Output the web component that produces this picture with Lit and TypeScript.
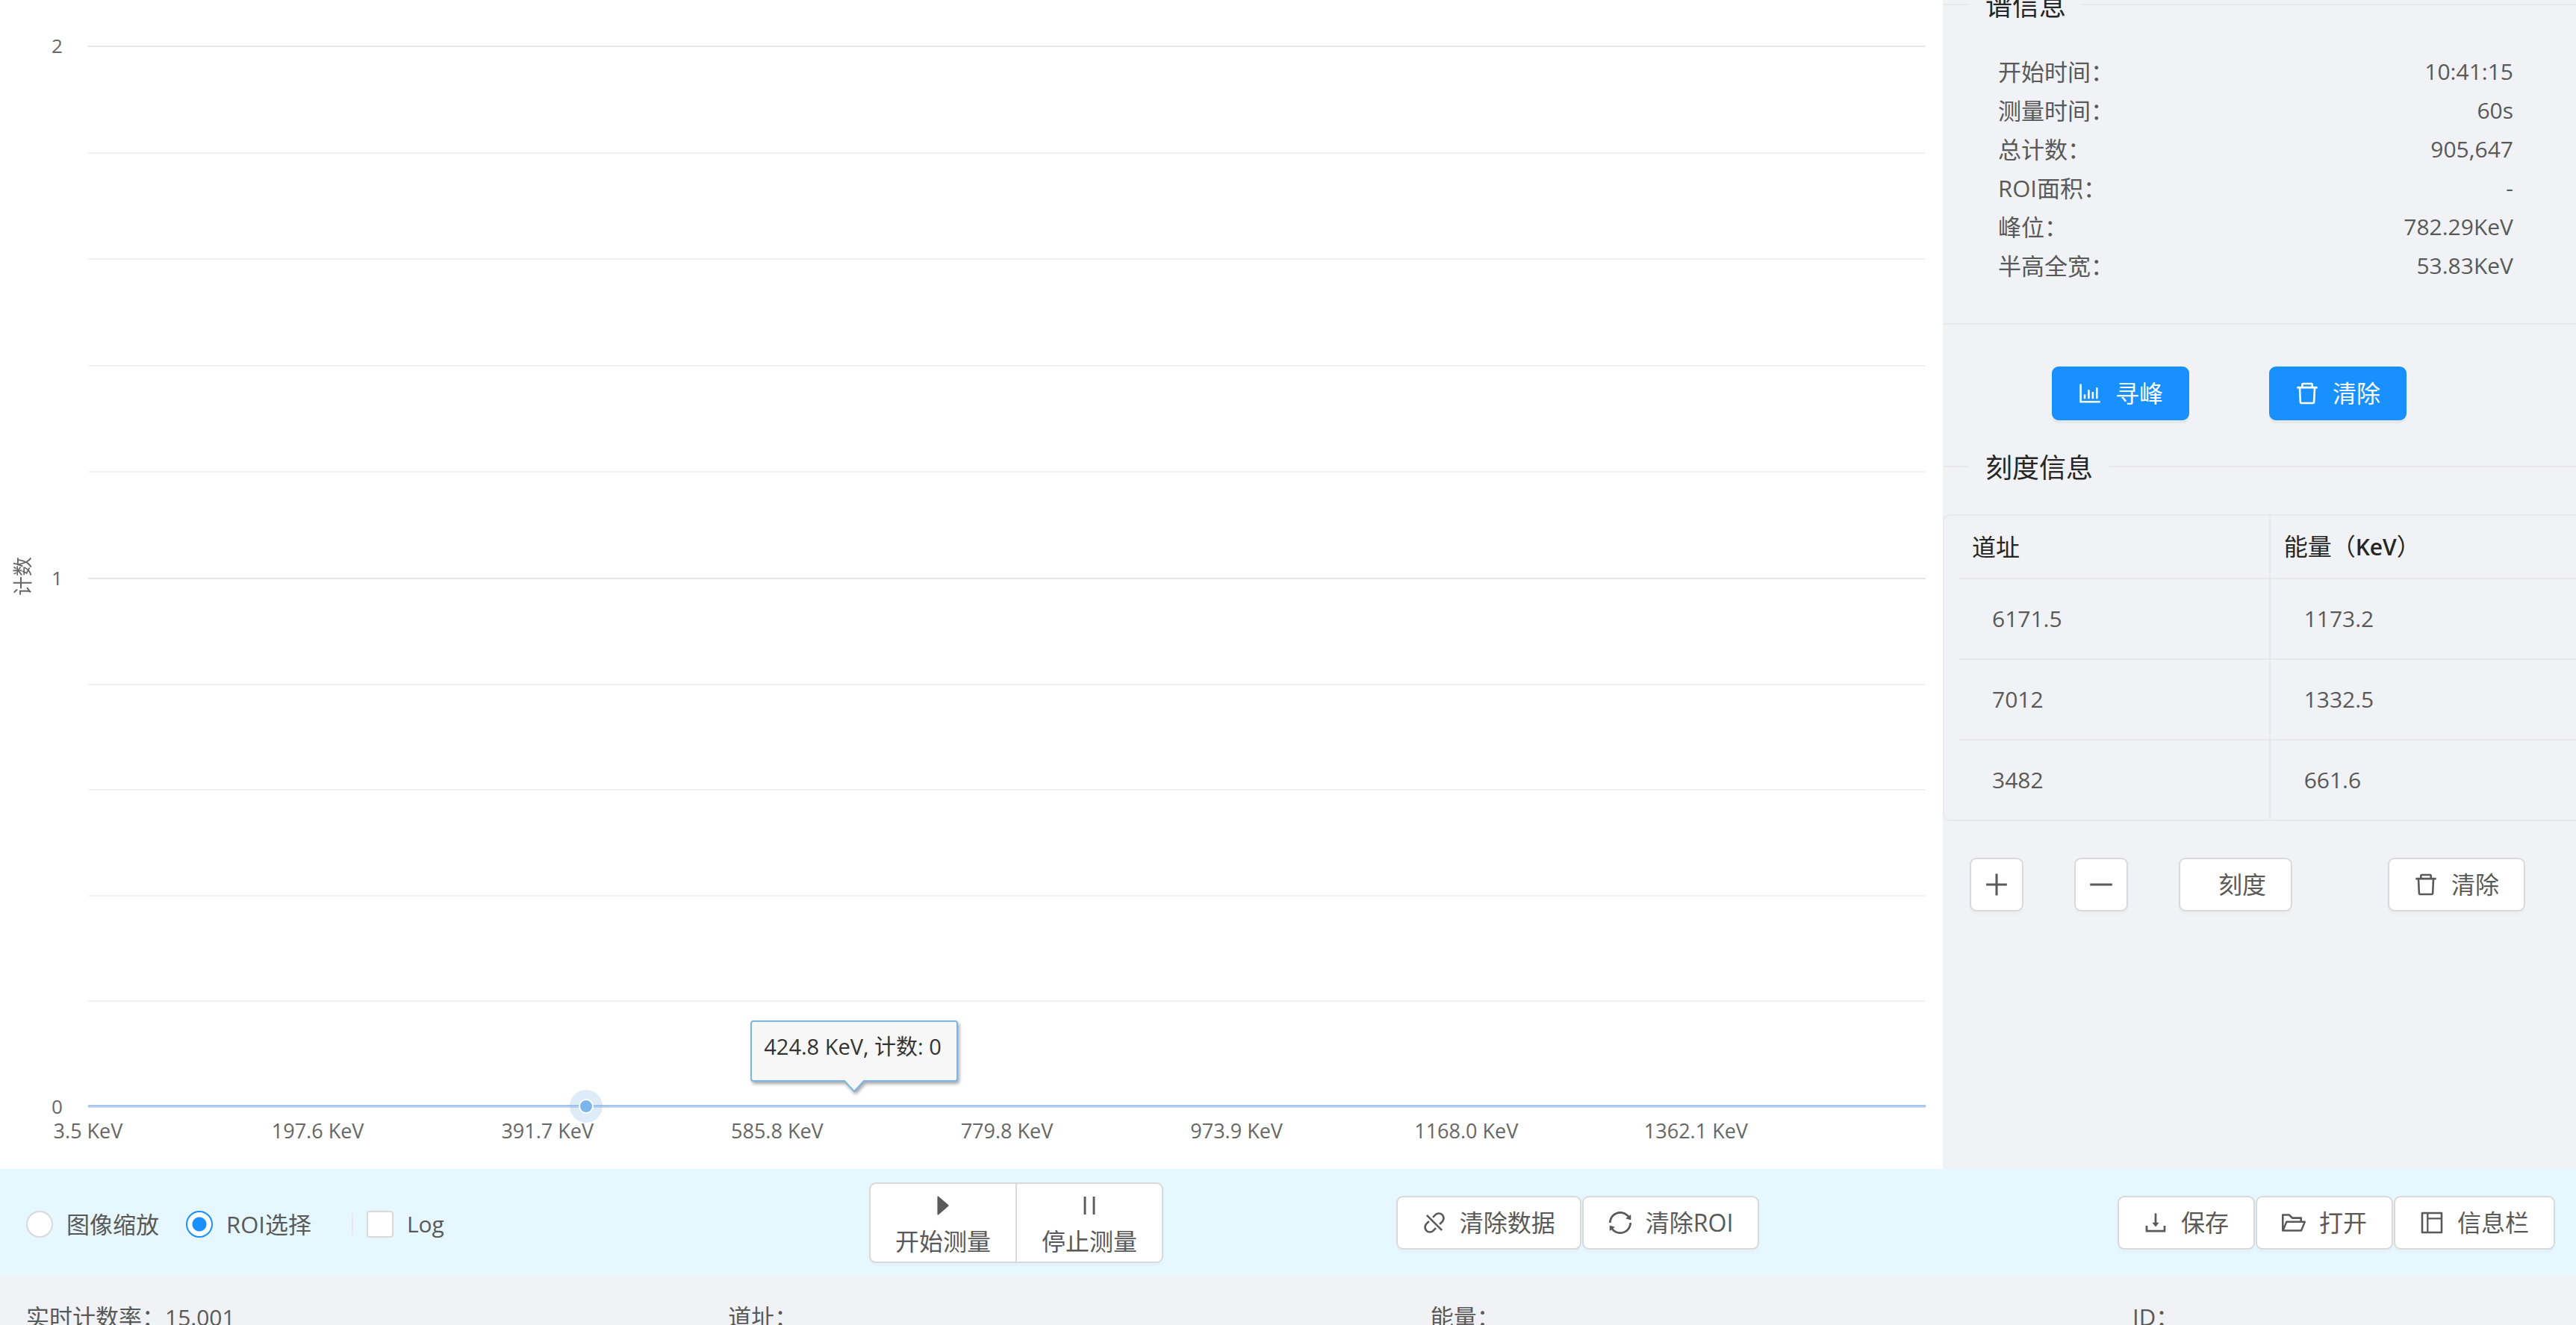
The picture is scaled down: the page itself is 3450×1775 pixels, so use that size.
import { LitElement, html, css, svg } from "lit";
import { customElement, property, state } from "lit/decorators.js";

const ICONS: Record<string, string> = {
  chart:
    "M888 792H200V168c0-4.4-3.6-8-8-8h-56c-4.4 0-8 3.6-8 8v688c0 4.4 3.6 8 8 8h752c4.4 0 8-3.6 8-8v-56c0-4.4-3.6-8-8-8zm-600-80h56c4.4 0 8-3.6 8-8V560c0-4.4-3.6-8-8-8h-56c-4.4 0-8 3.6-8 8v144c0 4.4 3.6 8 8 8zm152 0h56c4.4 0 8-3.6 8-8V384c0-4.4-3.6-8-8-8h-56c-4.4 0-8 3.6-8 8v320c0 4.4 3.6 8 8 8zm152 0h56c4.4 0 8-3.6 8-8V462c0-4.4-3.6-8-8-8h-56c-4.4 0-8 3.6-8 8v242c0 4.4 3.6 8 8 8zm152 0h56c4.4 0 8-3.6 8-8V304c0-4.4-3.6-8-8-8h-56c-4.4 0-8 3.6-8 8v400c0 4.4 3.6 8 8 8z",
  trash:
    "M360 184h-8c4.4 0 8-3.6 8-8v8h304v-8c0 4.4 3.6 8 8 8h-8v72h72v-80c0-35.3-28.7-64-64-64H352c-35.3 0-64 28.7-64 64v80h72v-72zm504 72H160c-17.7 0-32 14.3-32 32v32c0 4.4 3.6 8 8 8h60.4l24.7 523c1.6 34.1 29.8 61 63.9 61h454c34.2 0 62.3-26.8 63.9-61l24.7-523H888c4.4 0 8-3.6 8-8v-32c0-17.7-14.3-32-32-32zM731.3 840H292.7l-24.2-512h487l-24.2 512z",
  download:
    "M505.7 661a8 8 0 0 0 12.6 0l112-141.7c4.1-5.2.4-12.9-6.3-12.9h-74.1V168c0-4.4-3.6-8-8-8h-60c-4.4 0-8 3.6-8 8v338.3H400c-6.7 0-10.4 7.7-6.3 12.9l112 141.8zM878 626h-60c-4.4 0-8 3.6-8 8v154H214V634c0-4.4-3.6-8-8-8h-60c-4.4 0-8 3.6-8 8v198c0 17.7 14.3 32 32 32h684c17.7 0 32-14.3 32-32V634c0-4.4-3.6-8-8-8z",
  folder:
    "M928 444H820V330.4c0-17.7-14.3-32-32-32H473L355.7 186.2a8.15 8.15 0 0 0-5.5-2.2H96c-17.7 0-32 14.3-32 32v592c0 17.7 14.3 32 32 32h698c13 0 24.8-7.9 29.7-20l134-332c1.5-3.8 2.3-7.9 2.3-12 0-17.7-14.3-32-32-32zM136 256h188.5l119.6 114.4H748V444H238c-13 0-24.8 7.9-29.7 20L136 643.2V256zm635.3 512H159l103.3-256h612.4L771.3 768z",
  layout:
    "M880 112H144c-17.7 0-32 14.3-32 32v736c0 17.7 14.3 32 32 32h736c17.7 0 32-14.3 32-32V144c0-17.7-14.3-32-32-32zm-696 72h136v656H184V184zm656 656H384V384h456v456zM384 320V184h456v136H384z",
  sync:
    "M168 504.2c1-43.7 10-86.1 26.9-126 17.3-41 42.1-77.7 73.7-109.4S337 212.3 378 195c42.4-17.9 87.4-27 133.9-27s91.5 9.1 133.8 27A341.5 341.5 0 0 1 755 268.8c9.9 9.9 19.2 20.4 27.8 31.4l-60.2 47a8 8 0 0 0 3 14.1l175.7 43c5 1.2 9.9-2.6 9.9-7.7l.8-180.9c0-6.7-7.7-10.5-12.9-6.3l-56.4 44.1C765.8 155.1 646.2 92 511.8 92 282.7 92 96.3 275.6 92 503.8a8 8 0 0 0 8 8.2h60c4.4 0 7.9-3.5 8-7.8zm756 7.8h-60c-4.4 0-7.9 3.5-8 7.8-1 43.7-10 86.1-26.9 126-17.3 41-42.1 77.8-73.7 109.4A342.45 342.45 0 0 1 512.1 856a342.24 342.24 0 0 1-243.2-100.8c-9.9-9.9-19.2-20.4-27.8-31.4l60.2-47a8 8 0 0 0-3-14.1l-175.7-43c-5-1.2-9.9 2.6-9.9 7.7l-.7 181c0 6.7 7.7 10.5 12.9 6.3l56.4-44.1C258.2 868.9 377.8 932 512.2 932c229.2 0 415.5-183.7 419.8-411.8a8 8 0 0 0-8-8.2z",
  disconnect:
    "M832.6 191.4c-84.6-84.6-221.5-84.6-306 0l-96.9 96.9 51 51 96.9-96.9c53.8-53.8 144.6-59.5 204 0 59.5 59.5 53.8 150.2 0 204l-96.9 96.9 51.1 51.1 96.9-96.9c84.4-84.6 84.4-221.5-.1-306.1zM446.5 781.6c-53.8 53.8-144.6 59.5-204 0-59.5-59.5-53.8-150.2 0-204l96.9-96.9-51.1-51.1-96.9 96.9c-84.6 84.6-84.6 221.5 0 306s221.5 84.6 306 0l96.9-96.9-51-51-96.8 97zM260.3 209.4a8.03 8.03 0 0 0-11.3 0L209.4 249a8.03 8.03 0 0 0 0 11.3l554.4 554.4c3.1 3.1 8.2 3.1 11.3 0l39.6-39.6c3.1-3.1 3.1-8.2 0-11.3L260.3 209.4z",
  play:
    "M715.8 493.5L335 165.1c-14.2-12.2-35-1.2-35 18.5v656.8c0 19.7 20.8 30.7 35 18.5l380.8-328.4c10.9-9.4 10.9-27.6 0-37z",
  pause:
    "M304 176h80v672h-80zm408 0h-64c-4.4 0-8 3.6-8 8v656c0 4.4 3.6 8 8 8h64c4.4 0 8-3.6 8-8V184c0-4.4-3.6-8-8-8z",
  plus:
    "M482 152h60q8 0 8 8v314h306v76H550v314q0 8-8 8h-60q-8 0-8-8V550H168v-76h306V160q0-8 8-8z",
  minus:
    "M872 474H152c-4.4 0-8 3.6-8 8v60c0 4.4 3.6 8 8 8h720c4.4 0 8-3.6 8-8v-60c0-4.4-3.6-8-8-8z",
};

const icon = (name: string, cls = "icon") => html`
  <svg class=${cls} viewBox="64 64 896 896" fill="currentColor" aria-hidden="true">
    ${svg`<path d=${ICONS[name]}></path>`}
  </svg>
`;

const FONT = css`"Open Sans", "Noto Sans CJK SC", sans-serif`;

const buttonStyles = css`
  .btn {
    box-sizing: border-box;
    display: inline-flex;
    align-items: center;
    justify-content: center;
    gap: 18px;
    height: 72px;
    padding: 0 33px;
    border: 2px solid #d9d9d9;
    border-radius: 9px;
    background: #fff;
    color: #595959;
    font-family: ${FONT};
    font-size: 32px;
    line-height: 48px;
    white-space: nowrap;
    box-shadow: 0 4px 0 rgba(0, 0, 0, 0.016);
    cursor: pointer;
  }
  .btn.primary {
    border-color: #1890ff;
    background: #1890ff;
    color: #fff;
    box-shadow: 0 4px 0 rgba(0, 0, 0, 0.045);
  }
  .icon {
    flex: none;
    width: 32px;
    height: 32px;
  }
`;

@customElement("spectrum-chart")
class SpectrumChart extends LitElement {
  @property({ attribute: false }) ticks = [
    "3.5", "197.6", "391.7", "585.8", "779.8", "973.9", "1168.0", "1362.1",
  ];
  @property({ type: Number }) pointAt = 27.1;
  @property({ type: Number }) tipAt = 41.7;

  static styles = css`
    :host {
      display: block;
      background: #fff;
      color: #666;
      font-family: ${FONT};
      font-size: 26px;
      line-height: 32px;
    }
    .chart {
      box-sizing: border-box;
      height: 100%;
      display: grid;
      grid-template-columns: 60px 34px minmax(0, 1fr);
      grid-template-rows: minmax(0, 1fr) 82px;
      column-gap: 12px;
      padding: 61px 23px 0 0;
    }
    .axis-name {
      align-self: center;
      width: 32px;
      margin-left: 14px;
      writing-mode: vertical-rl;
      text-orientation: sideways;
      transform: rotate(180deg);
    }
    .bands {
      display: grid;
      grid-template-rows: 144fr 143fr 2px;
    }
    .value {
      height: 32px;
      margin-top: -16px;
      margin-bottom: -32px;
      margin-left: -3px;
    }
    .plot {
      position: relative;
      min-width: 0;
    }
    .plot.bands .band {
      display: grid;
      grid-template-rows: repeat(5, 1fr);
    }
    .line {
      border-top: 2px solid #f2f2f2;
    }
    .line.major {
      border-color: #e6e6e6;
    }
    .base {
      background: #ccd6eb;
    }
    .series {
      position: absolute;
      left: 0;
      right: 0;
      bottom: 2px;
      height: 2px;
      background: linear-gradient(#b7d5f4 50%, #8bb7e6 50%);
    }
    .marker {
      position: absolute;
      bottom: -20px;
      width: 44px;
      height: 44px;
      transform: translateX(-50%);
    }
    .tip {
      position: absolute;
      bottom: 15px;
      width: 290px;
      height: 108px;
      transform: translateX(-50%);
      color: #333;
      font-size: 29px;
      line-height: 36px;
    }
    .tip-shape {
      position: absolute;
      left: 0;
      top: 0;
      width: 290px;
      height: 108px;
      filter: drop-shadow(2px 3px 2px rgba(0, 0, 0, 0.35));
    }
    .tip-text {
      position: relative;
      padding: 23px 0 0 24px;
      white-space: nowrap;
    }
    .ticks {
      grid-column: 3;
      position: relative;
      font-size: 27px;
    }
    .tick {
      position: absolute;
      top: 15px;
      transform: translateX(-50%);
      white-space: nowrap;
    }
  `;

  render() {
    const band = html`<div class="band">
      ${[0, 1, 2, 3, 4].map((i) => html`<div class="line ${i === 0 ? "major" : ""}"></div>`)}
    </div>`;
    return html`
      <div class="chart">
        <div class="axis-name">计数</div>
        <div class="bands values">
          ${["2", "1", "0"].map((v) => html`<div class="value">${v}</div>`)}
        </div>
        <div class="plot bands">
          ${band}${band}
          <div class="base"></div>
          <div class="series"></div>
          <svg class="marker" style="left:${this.pointAt}%" viewBox="0 0 44 44">
            <circle cx="22" cy="22" r="22" fill="#7cb5ec" fill-opacity="0.25"></circle>
            <circle cx="22" cy="22" r="9" fill="#7cb5ec" stroke="#fff" stroke-width="2"></circle>
          </svg>
          <div class="tip" style="left:${this.tipAt}%">
            <svg class="tip-shape" viewBox="0 0 290 108">
              <path
                d="M10 7H280Q283 7 283 10V84Q283 87 280 87H158L145 101L132 87H10Q7 87 7 84V10Q7 7 10 7Z"
                fill="#f7f7f7" stroke="#7cb5ec" stroke-width="2"></path>
            </svg>
            <div class="tip-text">424.8 KeV, 计数: 0</div>
          </div>
        </div>
        <div class="ticks">
          ${this.ticks.map(
            (t, i) => html`<span class="tick" style="left:${(i * 100) / this.ticks.length}%">${t} KeV</span>`
          )}
        </div>
      </div>
    `;
  }
}

@customElement("info-panel")
class InfoPanel extends LitElement {
  @property({ attribute: false }) info = [
    ["开始时间", "10:41:15"],
    ["测量时间", "60s"],
    ["总计数", "905,647"],
    ["ROI面积", "-"],
    ["峰位", "782.29KeV"],
    ["半高全宽", "53.83KeV"],
  ];
  @property({ attribute: false }) points = [
    ["6171.5", "1173.2"],
    ["7012", "1332.5"],
    ["3482", "661.6"],
  ];

  static styles = [
    buttonStyles,
    css`
      :host {
        display: block;
        overflow: hidden;
        background: #f0f2f5;
        color: #595959;
        font-family: ${FONT};
        font-size: 32px;
        line-height: 52px;
      }
      .panel {
        margin-top: -20px;
      }
      .title {
        display: flex;
        align-items: center;
        gap: 22px;
        height: 56px;
        margin: 0;
        color: #262626;
        font-size: 36px;
        font-weight: 400;
        line-height: 56px;
      }
      .title::before,
      .title::after {
        content: "";
        height: 2px;
        margin-bottom: 4px;
        background: #e8e8e8;
      }
      .title::before {
        width: 35px;
      }
      .title::after {
        flex: 1;
      }
      .info {
        margin: 0;
        padding: 34px 84px 51px 74px;
        border-bottom: 2px solid #e8e8e8;
      }
      .row {
        display: flex;
        justify-content: space-between;
        font-size: 31px;
      }
      .amount {
        margin: 0;
        font-size: 30px;
      }
      .actions {
        display: flex;
        gap: 107px;
        padding: 56px 0 36px 146px;
      }
      .frame {
        margin-top: 34px;
        padding-left: 19px;
        border: 2px solid #e8e8e8;
        border-right: 0;
        border-radius: 9px 0 0 9px;
      }
      .table {
        width: 100%;
        border-collapse: separate;
        border-spacing: 0;
        table-layout: fixed;
      }
      .head,
      .cell {
        box-sizing: border-box;
        padding: 0 18px;
        border-bottom: 2px solid #e8e8e8;
        text-align: left;
        font-weight: 400;
      }
      .head {
        height: 85px;
        color: #262626;
      }
      .head:first-child {
        width: 50.5%;
      }
      .unit {
        font-size: 30px;
        font-weight: 600;
      }
      .cell {
        height: 108px;
        padding-left: 45px;
        font-size: 30px;
      }
      .head:first-child,
      .cell:first-child {
        border-right: 2px solid #e8e8e8;
      }
      .last .cell {
        height: 106px;
        border-bottom: 0;
      }
      .tools {
        display: grid;
        grid-template-columns: 5fr 5fr 10fr 9fr;
        justify-items: start;
        padding: 49px 0 0 36px;
      }
      .square {
        width: 72px;
        padding: 0;
      }
      .square .icon {
        width: 36px;
        height: 36px;
      }
      .indent {
        padding-left: 51px;
      }
    `,
  ];

  render() {
    return html`
      <div class="panel">
        <h2 class="title">谱信息</h2>
        <dl class="info">
          ${this.info.map(
            ([k, v]) => html`<div class="row"><dt>${k}：</dt><dd class="amount">${v}</dd></div>`
          )}
        </dl>
        <div class="actions">
          <button class="btn primary" type="button">${icon("chart")}<span>寻峰</span></button>
          <button class="btn primary" type="button">${icon("trash")}<span>清除</span></button>
        </div>
        <h2 class="title">刻度信息</h2>
        <div class="frame">
          <table class="table">
            <thead>
              <tr>
                <th class="head" scope="col">道址</th>
                <th class="head" scope="col">能量（<span class="unit">KeV</span>）</th>
              </tr>
            </thead>
            <tbody>
              ${this.points.map(
                (p, i) => html`<tr class=${i === this.points.length - 1 ? "last" : ""}>
                  ${p.map((v) => html`<td class="cell">${v}</td>`)}
                </tr>`
              )}
            </tbody>
          </table>
        </div>
        <div class="tools">
          <button class="btn square" type="button" aria-label="增加">${icon("plus")}</button>
          <button class="btn square" type="button" aria-label="减少">${icon("minus")}</button>
          <button class="btn indent" type="button">刻度</button>
          <button class="btn" type="button">${icon("trash")}<span>清除</span></button>
        </div>
      </div>
    `;
  }
}

@customElement("control-bar")
class ControlBar extends LitElement {
  @state() private mode = "roi";

  static styles = [
    buttonStyles,
    css`
      :host {
        display: block;
        background: #e6f7ff;
        color: #595959;
        font-family: ${FONT};
        font-size: 31px;
        line-height: 48px;
      }
      .bar {
        display: grid;
        grid-template-columns: 8fr 5fr 11fr;
        align-items: center;
        height: 144px;
      }
      .modes {
        display: flex;
        align-items: center;
        padding: 3px 0 0 35px;
      }
      .choice {
        display: flex;
        align-items: center;
        gap: 18px;
        margin-right: 36px;
        white-space: nowrap;
      }
      .latin {
        font-size: 30px;
      }
      .box {
        appearance: none;
        box-sizing: border-box;
        width: 36px;
        height: 36px;
        margin: 0;
        border: 2px solid #d9d9d9;
        border-radius: 4px;
        background: #fff;
      }
      .box.round {
        border-radius: 50%;
      }
      .box.round:checked {
        border-color: #1890ff;
        background: radial-gradient(circle, #1890ff 9px, #fff 10px);
      }
      .rule {
        width: 2px;
        height: 28px;
        margin: 0 18px;
        background: #e8e8e8;
      }
      .measure {
        display: flex;
        padding-left: 14px;
      }
      .tall {
        flex-direction: column;
        gap: 8px;
        height: 108px;
        padding-top: 9px;
      }
      .tall:first-child {
        border-radius: 9px 0 0 9px;
      }
      .tall:last-child {
        margin-left: -2px;
        border-radius: 0 9px 9px 0;
      }
      .right {
        display: flex;
        justify-content: space-between;
        padding: 0 28px 0 1px;
      }
      .group {
        display: flex;
        gap: 1px;
      }
    `,
  ];

  render() {
    return html`
      <div class="bar">
        <div class="modes">
          <label class="choice">
            <input class="box round" type="radio" name="mode" .checked=${this.mode === "zoom"}
              @change=${() => (this.mode = "zoom")} />图像缩放
          </label>
          <label class="choice">
            <input class="box round" type="radio" name="mode" .checked=${this.mode === "roi"}
              @change=${() => (this.mode = "roi")} />ROI选择
          </label>
          <span class="rule"></span>
          <label class="choice latin"><input class="box" type="checkbox" />Log</label>
        </div>
        <div class="measure">
          <button class="btn tall" type="button">${icon("play")}<span>开始测量</span></button>
          <button class="btn tall" type="button">${icon("pause")}<span>停止测量</span></button>
        </div>
        <div class="right">
          <div class="group">
            <button class="btn" type="button">${icon("disconnect")}<span>清除数据</span></button>
            <button class="btn" type="button">${icon("sync")}<span>清除ROI</span></button>
          </div>
          <div class="group">
            <button class="btn" type="button">${icon("download")}<span>保存</span></button>
            <button class="btn" type="button">${icon("folder")}<span>打开</span></button>
            <button class="btn" type="button">${icon("layout")}<span>信息栏</span></button>
          </div>
        </div>
      </div>
    `;
  }
}

@customElement("app-root")
class AppRoot extends LitElement {
  static styles = css`
    :host {
      display: flex;
      flex-direction: column;
      height: 100vh;
      overflow: hidden;
      background: #f0f2f5;
      color: #595959;
      font-family: ${FONT};
      font-size: 31px;
      line-height: 50px;
    }
    .main {
      flex: 1;
      min-height: 0;
      display: grid;
      grid-template-columns: minmax(0, 1301fr) minmax(0, 424fr);
      grid-template-rows: minmax(0, 1fr);
    }
    .status {
      box-sizing: border-box;
      flex: none;
      display: grid;
      grid-template-columns: repeat(3, 19fr) 12fr;
      height: 65px;
      padding: 29px 0 0 35px;
      white-space: nowrap;
    }
    .number {
      font-size: 30px;
    }
  `;

  render() {
    return html`
      <div class="main">
        <spectrum-chart></spectrum-chart>
        <info-panel></info-panel>
      </div>
      <control-bar></control-bar>
      <div class="status" lang="zh-CN">
        <span>实时计数率：<span class="number">15.001</span></span>
        <span>道址：</span>
        <span>能量：</span>
        <span>ID：</span>
      </div>
    `;
  }
}
